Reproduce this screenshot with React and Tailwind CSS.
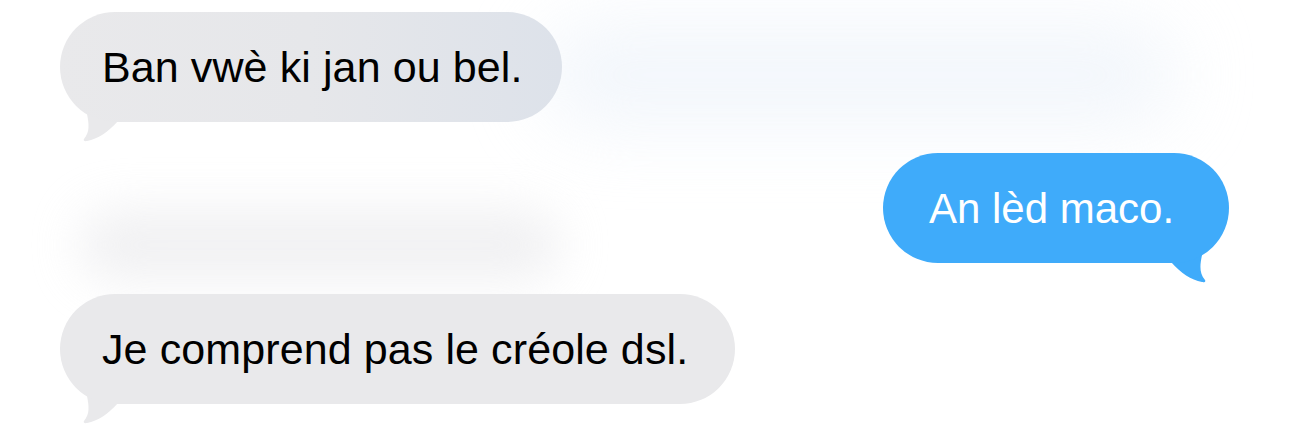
import React from 'react';

const font = { fontFamily: '"Liberation Sans", Arial, sans-serif' };

// iOS style bubble tail, drawn for a left (incoming) bubble; mirrored for outgoing
function Tail({ color, flip }) {
  return (
    <svg
      width="70"
      height="50"
      viewBox="0 0 70 50"
      className={`absolute bottom-[-20px] ${flip ? 'right-0 -scale-x-100' : 'left-0'}`}
    >
      <path
        d="M40 0 L27 22 C29 32 30 40 24 47 C23 48.5 24.5 49.5 27 49 C38 47 48 40 58 29 L62 0 Z"
        fill={color}
      />
    </svg>
  );
}

function Bubble({ text, outgoing, width, bg, fill }) {
  return (
    <div className={`relative ${outgoing ? 'self-end' : 'self-start'}`}>
      <Tail color={fill} flip={outgoing} />
      <div
        className={`relative h-[110px] rounded-full flex items-center ${width} ${bg} ${
          outgoing ? 'text-white pl-[46px] text-[42px]' : 'text-black pl-[42px] text-[43px] tracking-[0.1px]'
        }`}
        style={font}
      >
        {text}
      </div>
    </div>
  );
}

export default function App() {
  return (
    <div className="relative w-[1290px] h-[429px] bg-white overflow-hidden">
      {/* soft haze from the original capture */}
      <div className="absolute left-[540px] top-[20px] w-[640px] h-[110px] rounded-full bg-[#e9f0f9] blur-[36px] opacity-55" />
      <div className="absolute left-[80px] top-[210px] w-[480px] h-[70px] rounded-full bg-[#e7e7ea] blur-[24px] opacity-60" />

      <div className="relative flex flex-col gap-[31px] pt-[12px] pl-[60px] pr-[61px]">
        <Bubble
          text="Ban vwè ki jan ou bel."
          width="w-[502px]"
          bg="bg-gradient-to-r from-[#e9e9eb] via-[#e6e7ea] to-[#dde2ea]"
          fill="#e9e9eb"
        />
        <Bubble
          text="An lèd maco."
          outgoing
          width="w-[346px]"
          bg="bg-[#3fabfa]"
          fill="#3fabfa"
        />
        <Bubble
          text="Je comprend pas le créole dsl."
          width="w-[675px]"
          bg="bg-[#e9e9eb]"
          fill="#e9e9eb"
        />
      </div>
    </div>
  );
}
